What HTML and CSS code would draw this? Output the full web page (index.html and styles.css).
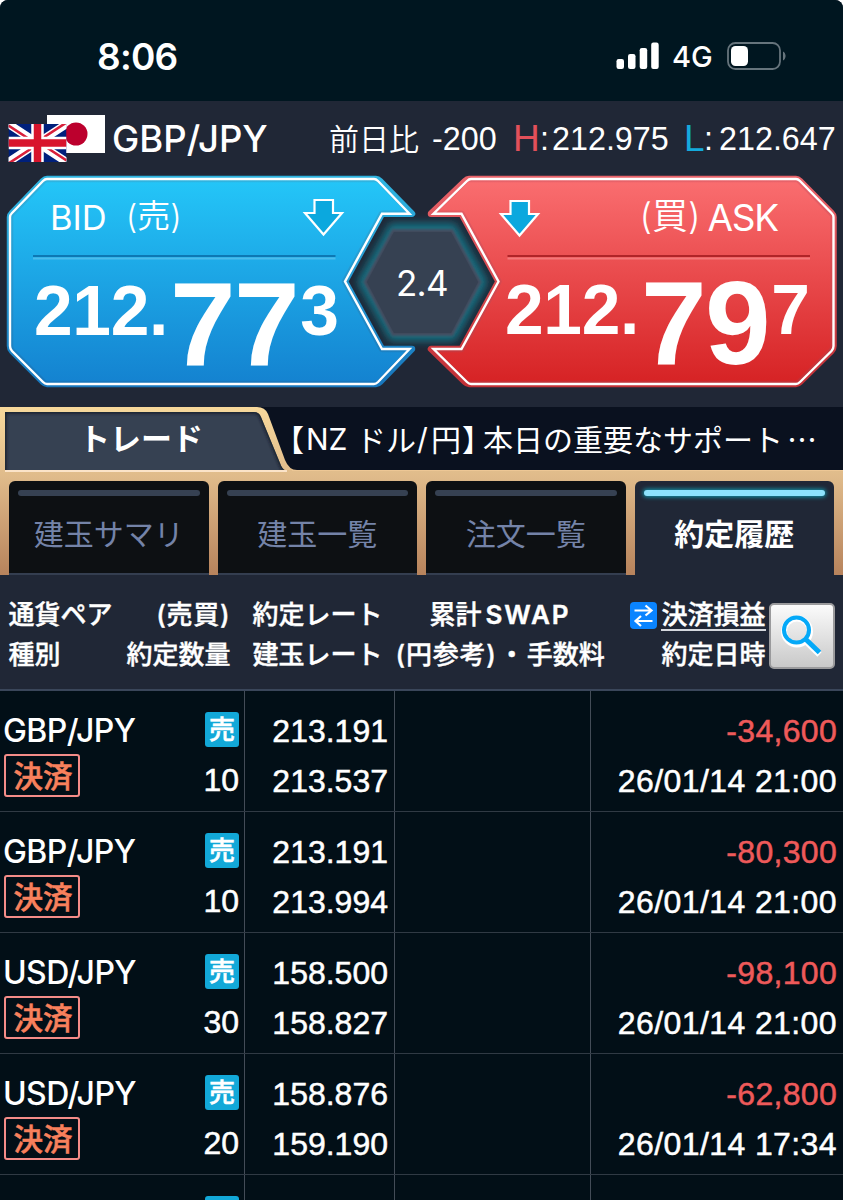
FILE: index.html
```html
<!DOCTYPE html>
<html lang="ja">
<head>
  <meta charset="UTF-8" />
  <meta name="viewport" content="width=device-width, initial-scale=1.0"/>
  <title>約定履歴</title>
  <link rel="stylesheet" href="styles.css">
</head>
<body>
<div class="phone">

  <div class="status">
    <span class="time">8:06</span>
    <svg class="signal" width="44" height="28" viewBox="0 0 44 28" fill="#fff">
      <rect x="0.5" y="17" width="7.5" height="10" rx="2.2"/>
      <rect x="12" y="12" width="7.5" height="15" rx="2.2"/>
      <rect x="23.7" y="6" width="7.5" height="21" rx="2.2"/>
      <rect x="35.2" y="0.5" width="7.5" height="26.5" rx="2.2"/>
    </svg>
    <span class="net">4G</span>
    <svg class="battery" width="60" height="28" viewBox="0 0 60 28">
      <rect x="1" y="1" width="52" height="26" rx="7.5" fill="none" stroke="#66747c" stroke-width="1.8"/>
      <rect x="4" y="4" width="17" height="20" rx="4.5" fill="#fff"/>
      <path d="M56 9.5c3.4 1.6 3.4 7.4 0 9z" fill="#66747c"/>
    </svg>
  </div>

  <div class="pairbar">
    <svg class="flags" width="98" height="50" viewBox="0 0 98 50">
      <rect x="39" y="1" width="58" height="38" fill="#fff"/>
      <circle cx="68" cy="20" r="11.5" fill="#bc002d"/>
      <svg x="0.5" y="10" width="58" height="38" viewBox="0 0 58 38">
        <rect width="58" height="38" fill="#00207c"/>
        <path d="M0 0L58 38M58 0L0 38" stroke="#fff" stroke-width="8"/>
        <path d="M0 1.5L29 20.5M29 17.5L58 36.5M58 -1.5L29 17.5M29 20.5L0 39.5" stroke="#d8203a" stroke-width="2.6"/>
        <path d="M29 0V38M0 19H58" stroke="#fff" stroke-width="12.5"/>
        <path d="M29 0V38M0 19H58" stroke="#d8142c" stroke-width="7.5"/>
      </svg>
    </svg>
    <span class="pair">GBP/JPY</span>
    <span class="diff-label">前日比</span>
    <span class="num">-200</span>
    <span class="mark high">H</span>
    <span class="num">:</span>
    <span class="num">212.975</span>
    <span class="mark low">L</span>
    <span class="num">:</span>
    <span class="num">212.647</span>
  </div>

  <div class="quote">
    <svg class="frame" width="843" height="232" viewBox="0 175 843 232">
      <defs>
        <linearGradient id="blue" x1="0" y1="0" x2="0" y2="1">
          <stop offset="0" stop-color="#24c6f8"/>
          <stop offset="1" stop-color="#1482d0"/>
        </linearGradient>
        <linearGradient id="red" x1="0" y1="0" x2="0" y2="1">
          <stop offset="0" stop-color="#fa6e70"/>
          <stop offset="1" stop-color="#d62224"/>
        </linearGradient>
        <linearGradient id="blueEdge" x1="0" y1="0" x2="0" y2="1">
          <stop offset="0" stop-color="#2fb4e0"/>
          <stop offset="1" stop-color="#1877bd"/>
        </linearGradient>
        <linearGradient id="redEdge" x1="0" y1="0" x2="0" y2="1">
          <stop offset="0" stop-color="#e8636a"/>
          <stop offset="1" stop-color="#c23036"/>
        </linearGradient>
        <filter id="glow" x="-30%" y="-30%" width="160%" height="160%"><feGaussianBlur stdDeviation="4.5"/></filter>
        <filter id="soft" x="-10%" y="-10%" width="120%" height="120%"><feGaussianBlur stdDeviation="1.2"/></filter>
      </defs>
      <!-- spread hexagon -->
      <path d="M390 223H455L488 282L455 341H390L357 282Z" fill="#137284" filter="url(#glow)"/>
      <path d="M393 230.5H452L480 282L452 334.5H393L365 282Z" fill="#364152" stroke="#454f62" stroke-width="3" filter="url(#soft)"/>
      <path d="M394 232H451L478 282L451 333H394L367 282Z" fill="#364152"/>
      <!-- bid -->
      <path d="M47 179H376Q378 179 380 181L412 213.7H382L345 281.5L382 349H412L380 382Q378 384 376 384H47Q45 384 43 382L12 351Q10 349 10 346V217Q10 215 12 213L43 181Q45 179 47 179Z" fill="url(#blue)" stroke="url(#blueEdge)" stroke-width="6.5" stroke-linejoin="round"/>
      <path d="M47 179H374Q376 179 378 181L409.5 213.7H382L345 281.5L382 349H409.5L378 382Q376 384 374 384H47Q45 384 43 382L12 351Q10 349 10 346V217Q10 215 12 213L43 181Q45 179 47 179Z" fill="none" stroke="#fff" stroke-width="2.4"/>
      <path d="M33 256H335.5" stroke="#0d78b4" stroke-width="2"/>
      <path d="M33 258.5H335.5" stroke="#4cbcec" stroke-width="2"/>
      <path d="M314.5 200H333V213H342L323.5 234.5L305 213H314.5Z" fill="#0ba8de" stroke="#fff" stroke-width="2.2"/>
      <!-- ask -->
      <path d="M469 179H796Q798 179 800 181L831.5 213Q833.5 215 833.5 217V346Q833.5 349 831.5 351L800 382Q798 384 796 384H469Q467 384 465 382L431 349H461.5L498.5 281.5L461.5 213.7H431L465 181Q467 179 469 179Z" fill="url(#red)" stroke="url(#redEdge)" stroke-width="6.5" stroke-linejoin="round"/>
      <path d="M471 179H796Q798 179 800 181L831.5 213Q833.5 215 833.5 217V346Q833.5 349 831.5 351L800 382Q798 384 796 384H471Q469 384 467 382L433.5 349H461.5L498.5 281.5L461.5 213.7H433.5L467 181Q469 179 471 179Z" fill="none" stroke="#fff" stroke-width="2.4"/>
      <path d="M507.5 256H810" stroke="#b02428" stroke-width="2"/>
      <path d="M507.5 258.5H810" stroke="#f4787a" stroke-width="2"/>
      <path d="M510.5 201H529V214H538L519.5 235.5L501 214H510.5Z" fill="#0ba8de" stroke="#fff" stroke-width="2.2"/>
    </svg>
    <div class="side bid">
      <div class="caption"><span class="word">BID</span><span class="kanji">(売)</span></div>
      <div class="rate"><span class="small">212.</span><span class="big">77</span><span class="small last">3</span></div>
    </div>
    <div class="spread">2.4</div>
    <div class="side ask">
      <div class="caption"><span class="kanji">(買)</span><span class="word">ASK</span></div>
      <div class="rate"><span class="small">212.</span><span class="big">79</span><span class="small last">7</span></div>
    </div>
  </div>

  <div class="board">
    <div class="news">
      <svg class="news-bg" width="843" height="66" viewBox="0 0 843 66">
        <defs>
          <filter id="inset" x="-5%" y="-10%" width="110%" height="120%"><feGaussianBlur stdDeviation="1.5"/></filter>
          <clipPath id="tabclip"><path d="M5 5H254Q259 5 261 10L280 56Q282 62 285.5 63.5H5Z"/></clipPath>
        </defs>
        <path d="M843 0H257Q265 0 268 7L285 53Q289 63 297 63H843Z" fill="#0a111f"/>
        <g clip-path="url(#tabclip)">
          <path d="M0 0H300V66H0Z" fill="#364152"/>
          <path d="M5 66V5H254Q259 5 261 10L280 56Q282 62 286 64" fill="none" stroke="#151c28" stroke-width="3" filter="url(#inset)"/>
        </g>
        <path d="M5 64H287" stroke="#fbe3c8" stroke-width="2"/>
        <path d="M292 63.5H843" stroke="#edc795" stroke-width="1"/>
      </svg>
      <span class="trade">トレード</span>
      <span class="headline"><b>【</b><i>NZ</i><span>ドル</span><i>/</i><span>円</span><b>】</b><span>本日の重要なサポート</span><span>…</span></span>
    </div>
    <nav class="tabs">
      <a class="tab">建玉サマリ</a>
      <a class="tab">建玉一覧</a>
      <a class="tab">注文一覧</a>
      <a class="tab active">約定履歴</a>
    </nav>
  </div>

  <div class="thead">
    <div class="h1"><span>通貨ペア</span><span class="paren">(売買)</span><span>種別</span><span>約定数量</span></div>
    <div class="h2">約定レート<br>建玉レート</div>
    <div class="h3"><span class="swap">累計<em>SWAP</em></span><br><span class="paren">(円参考)</span><span class="dot">・</span>手数料</div>
    <div class="h4">
      <svg class="swap-icon" width="27" height="27" viewBox="0 0 27 27">
        <rect width="27" height="27" rx="4" fill="#0a84ff"/>
        <path d="M4.5 8.5H21M15.5 3.5L21.5 8.5L15.5 13.5M22.5 19H6M11 14L5.5 19L11 24" fill="none" stroke="#fff" stroke-width="2.2"/>
      </svg><span class="sort">決済損益</span><br>約定日時
    </div>
    <button class="search">
      <svg width="61" height="61" viewBox="0 0 61 61" fill="none">
        <circle cx="26" cy="26.5" r="13" stroke="#fff" stroke-width="6"/>
        <path d="M35 36.5L48.5 49.5" stroke="#fff" stroke-width="6"/>
        <circle cx="25.5" cy="25" r="12.5" stroke="#04a9f8" stroke-width="4"/>
        <path d="M35 34.5L48.5 47.5" stroke="#04a9f8" stroke-width="5"/>
      </svg>
    </button>
  </div>

  <div class="rows">
    <div class="row">
      <div class="c1"><span class="name">GBP/JPY</span><span class="sell">売</span><span class="settle">決済</span><span class="qty">10</span></div>
      <div class="c2">213.191<br>213.537</div>
      <div class="c3"></div>
      <div class="c4"><span class="loss">-34,600</span><br><span class="date">26/01/14 21:00</span></div>
    </div>
    <div class="row">
      <div class="c1"><span class="name">GBP/JPY</span><span class="sell">売</span><span class="settle">決済</span><span class="qty">10</span></div>
      <div class="c2">213.191<br>213.994</div>
      <div class="c3"></div>
      <div class="c4"><span class="loss">-80,300</span><br><span class="date">26/01/14 21:00</span></div>
    </div>
    <div class="row">
      <div class="c1"><span class="name">USD/JPY</span><span class="sell">売</span><span class="settle">決済</span><span class="qty">30</span></div>
      <div class="c2">158.500<br>158.827</div>
      <div class="c3"></div>
      <div class="c4"><span class="loss">-98,100</span><br><span class="date">26/01/14 21:00</span></div>
    </div>
    <div class="row">
      <div class="c1"><span class="name">USD/JPY</span><span class="sell">売</span><span class="settle">決済</span><span class="qty">20</span></div>
      <div class="c2">158.876<br>159.190</div>
      <div class="c3"></div>
      <div class="c4"><span class="loss">-62,800</span><br><span class="date">26/01/14 17:34</span></div>
    </div>
    <div class="row">
      <div class="c1"><span class="name"></span><span class="sell"></span></div>
      <div class="c2"></div>
      <div class="c3"></div>
      <div class="c4"></div>
    </div>
  </div>

</div>
</body>
</html>
```
FILE: styles.css
```css
* {
  box-sizing: border-box;
}

body {
  margin: 0;
  background: #fff;
  color: #fff;
  font-family: Inter, "Noto Sans CJK JP", sans-serif;
}

.phone {
  width: 843px;
  height: 1200px;
  overflow: hidden;
  border-radius: 8px 8px 0 0;
  background: #202736;
}

/* status bar */
.status {
  height: 101px;
  background: #001620;
  display: flex;
  align-items: center;
  padding: 11px 56px 0 97px;
}

.time {
  flex: 1;
  padding-top: 2px;
  font-size: 37px;
  font-weight: 600;
  line-height: 40px;
  letter-spacing: -0.8px;
}

.signal {
  margin-right: 1px;
}

.net {
  font-size: 29px;
  font-weight: 500;
  line-height: 36px;
  width: 43px;
  margin: 2px 12px 0 11px;
}

/* pair line */
.pairbar {
  height: 74px;
  display: grid;
  grid-template-columns: 104px 217px 103px 81px 27px 12px 132px 20px 15px 120px;
  padding: 13px 0 0 8px;
  line-height: 50px;
  white-space: nowrap;
}

.pair {
  font-size: 36.5px;
  font-weight: 500;
}

.diff-label {
  font-size: 30px;
  font-weight: 350;
  line-height: 46px;
  font-family: "Noto Sans CJK JP", sans-serif;
}

.num, .mark {
  font-family: "Liberation Sans", Arial, sans-serif;
  font-size: 32.3px;
}

.mark {
  font-size: 37px;
}

.high {
  color: #e2505a;
}

.low {
  color: #14aadc;
}

/* bid and ask panels */
.quote {
  height: 232px;
  display: grid;
  grid-template-columns: 345px 154px 344px;
}

.frame {
  grid-area: 1 / 1 / 2 / 4;
}

.side, .spread {
  z-index: 1;
  white-space: nowrap;
}

.bid {
  grid-area: 1 / 1;
  padding-left: 34px;
}

.spread {
  grid-area: 1 / 2;
  text-align: center;
  padding: 85px 0 0 0;
  font-size: 35px;
  line-height: 46px;
  letter-spacing: -0.6px;
}

.ask {
  grid-area: 1 / 3;
  padding-left: 6px;
}

.caption {
  display: flex;
  height: 90px;
  padding-top: 20px;
  font-size: 33px;
  line-height: 46px;
}

.kanji {
  font-weight: 350;
  line-height: 43px;
}

.bid .caption {
  padding-left: 16px;
  gap: 19px;
}

.bid .word {
  font-size: 34.5px;
}

.ask .caption {
  justify-content: flex-end;
  padding-right: 65px;
  gap: 7px;
}

.ask .word {
  font-size: 37px;
  letter-spacing: -1.2px;
}

.ask .kanji {
  font-size: 36px;
  line-height: 42px;
}

.rate {
  display: flex;
  align-items: flex-start;
  font-family: "Liberation Sans", Arial, sans-serif;
  font-weight: bold;
}

.small {
  font-size: 69.5px;
  line-height: 69px;
  margin-top: 12px;
  letter-spacing: -0.3px;
}

.big {
  font-size: 118px;
  line-height: 118px;
  letter-spacing: -1.6px;
  margin-left: 2px;
}

.last {
  margin-left: 2px;
}

.ask .rate {
  margin-top: -1px;
}

/* news strip and tabs on the gold board */
.board {
  height: 168px;
  background: linear-gradient(#f8d99c, #dfba8a 42%, #b7835c);
}

.news {
  display: grid;
  grid-template-columns: 282px 561px;
  height: 74px;
}

.news-bg {
  grid-area: 1 / 1 / 2 / 3;
}

.trade {
  grid-area: 1 / 1;
  z-index: 1;
  text-align: center;
  font-size: 31px;
  font-weight: 700;
  line-height: 64px;
}

.headline {
  grid-area: 1 / 2;
  z-index: 1;
  display: grid;
  grid-template-columns: 17px 50px 61px 14px 31px 21px 304px 30px;
  padding-left: 7px;
  font-family: "Noto Sans CJK JP", sans-serif;
  font-size: 30px;
  line-height: 62px;
  white-space: nowrap;
}

.headline i {
  font-family: Inter, sans-serif;
  font-style: normal;
  line-height: 65px;
}

/* half-width brackets */
.headline b {
  font-weight: 400;
  font-feature-settings: "halt";
}

.tabs {
  display: flex;
  gap: 9px;
  padding: 0 9px;
}

.tab {
  flex: 1;
  height: 94px;
  border-radius: 6px 6px 0 0;
  border-bottom: 2px solid #343e50;
  background: #0d1013;
  color: #7483a8;
  font-size: 30px;
  text-align: center;
  text-indent: -1px;
  line-height: 76px;
}

.tab::before {
  content: "";
  display: block;
  height: 6px;
  margin: 9px 9px 0;
  border-radius: 3px;
  background: #364152;
}

.active {
  background: #202736;
  border-bottom-color: #202736;
  color: #fff;
  font-weight: 700;
}

.active::before {
  background: #8de2fc;
  box-shadow: 0 0 4px 1px #1196ac;
}

/* table head */
.thead {
  height: 116px;
  border-bottom: 2px solid #3a465a;
  display: grid;
  grid-template-columns: 222px 152px 228px 155px 66px;
  padding: 20px 0 0 8.5px;
  font-size: 26px;
  font-weight: 500;
  line-height: 39.5px;
  white-space: nowrap;
  -webkit-text-stroke: 0.4px currentColor;
}

.h1 {
  display: grid;
  grid-template-columns: auto auto;
  justify-content: space-between;
  align-content: start;
}

.h1 span:nth-child(even) {
  text-align: right;
}

.paren {
  letter-spacing: 0.8px;
}

.h2 {
  padding-left: 22px;
}

.h3 {
  padding-left: 13px;
}

.swap {
  padding-left: 34px;
}

.swap em {
  font-style: normal;
  font-weight: 600;
  letter-spacing: 1.9px;
  padding-left: 4px;
}

.dot {
  margin: 0 2px;
}

.h4 {
  text-align: right;
}

.swap-icon {
  vertical-align: -5px;
  margin-right: 4px;
}

.sort {
  display: inline-block;
  height: 36px;
  border-bottom: 2px solid #d5d8de;
}

.search {
  width: 66px;
  height: 66px;
  margin: 8px 0 0 3px;
  padding: 0;
  border: 2px solid #9a9a9c;
  border-radius: 5px;
  background: linear-gradient(#fbfbfb, #c9c9c9);
}

/* history rows */
.rows {
  background: #020f17;
}

.row {
  height: 121px;
  border-bottom: 1px solid #303a44;
  display: grid;
  grid-template-columns: 245px 150px 196px 252px;
  font-family: "Liberation Sans", Arial, sans-serif;
  font-size: 32px;
  line-height: 50px;
  white-space: nowrap;
}

.c1, .c2, .c3 {
  border-right: 1px solid #434c57;
}

.c1 {
  display: grid;
  grid-template-columns: 1fr auto;
  grid-template-rows: 50px 50px;
  padding: 13px 5px 0 4px;
}

.name {
  font-family: Inter, sans-serif;
  font-size: 32px;
  font-weight: 500;
  line-height: 54px;
  letter-spacing: -0.6px;
  margin-left: -1px;
}

.sell {
  justify-self: end;
  width: 34px;
  height: 35px;
  margin-top: 8px;
  border-radius: 3px;
  background: #12a8d8;
  text-align: center;
  font: 500 26px/32px "Noto Sans CJK JP", sans-serif;
}

.settle {
  width: 76px;
  height: 43px;
  padding-left: 2px;
  border: 2.5px solid #f48c88;
  border-radius: 3px;
  color: #f8805c;
  text-align: center;
  font: 500 29.5px/37px "Noto Sans CJK JP", sans-serif;
}

.qty {
  text-align: right;
  line-height: 53px;
}

.c2, .c4 {
  padding: 15px 6px 0 0;
  text-align: right;
}

.sell, .settle, .qty, .c2, .c4 {
  -webkit-text-stroke: 0.5px currentColor;
}

.loss {
  color: #ee5a5a;
  letter-spacing: 0.3px;
}

.date {
  letter-spacing: 0.4px;
}
```
